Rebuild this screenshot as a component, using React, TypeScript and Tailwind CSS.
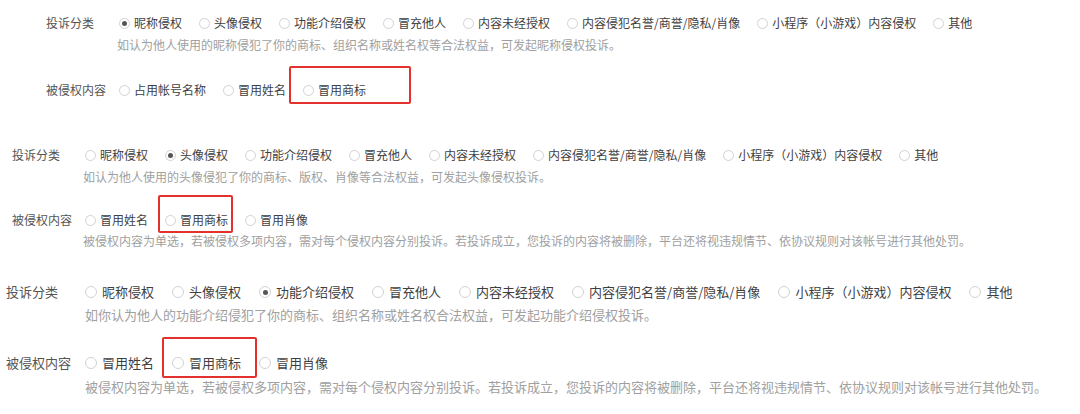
import React from 'react'
import clsx from 'clsx'

const categories = [
  '昵称侵权',
  '头像侵权',
  '功能介绍侵权',
  '冒充他人',
  '内容未经授权',
  '内容侵犯名誉/商誉/隐私/肖像',
  '小程序（小游戏）内容侵权',
  '其他',
]

const penaltyNote =
  '被侵权内容为单选，若被侵权多项内容，需对每个侵权内容分别投诉。若投诉成立，您投诉的内容将被删除，平台还将视违规情节、依协议规则对该帐号进行其他处罚。'

const sizes = {
  sm: {
    text: 'text-[12px]',
    row: 'h-[20px]',
    label: 'w-[73px]',
    desc: 'h-[18px] leading-[18px] pl-[71px]',
    radio: 'size-[11px]',
    opt: 'gap-[4px] mr-[17px]',
  },
  md: {
    text: 'text-[13px]',
    row: 'h-[22px]',
    label: 'w-[79px]',
    desc: 'h-[20px] leading-[20px] pl-[79px]',
    radio: 'size-[12px]',
    opt: 'gap-[5px] mr-[18px]',
  },
}

type Size = keyof typeof sizes

function Radio({ checked, size }: { checked?: boolean; size: Size }) {
  return (
    <span
      className={clsx(
        'flex shrink-0 items-center justify-center rounded-full border border-[#d2d2d2] bg-white',
        sizes[size].radio
      )}
    >
      {checked && <span className="size-[5px] rounded-full bg-[#555]" />}
    </span>
  )
}

function Option({
  text,
  checked,
  size,
  box,
}: {
  text: string
  checked?: boolean
  size: Size
  box?: string
}) {
  return (
    <div className={clsx('relative flex items-center whitespace-nowrap', sizes[size].opt)}>
      <Radio checked={checked} size={size} />
      <span>{text}</span>
      {box && (
        <span className={clsx('pointer-events-none absolute rounded-[2px] border-2 border-[#e3312d]', box)} />
      )}
    </div>
  )
}

function Row({
  label,
  size,
  className,
  children,
}: {
  label: string
  size: Size
  className?: string
  children: React.ReactNode
}) {
  return (
    <div className={clsx('flex items-center', sizes[size].row, className)}>
      <div className={clsx('shrink-0 text-[#555]', sizes[size].label)}>{label}</div>
      <div className="flex items-center">{children}</div>
    </div>
  )
}

function Note({ size, className, children }: { size: Size; className?: string; children: React.ReactNode }) {
  return <div className={clsx('whitespace-nowrap text-[#a0a0a0]', sizes[size].desc, className)}>{children}</div>
}

type Block = {
  size: Size
  wrap: string
  selected: number
  desc: string
  descGap: string
  contentGap: string
  content: string[]
  boxed: number
  box: string
  noteGap?: string
}

const blocks: Block[] = [
  {
    size: 'sm',
    wrap: 'pl-[46px]',
    selected: 0,
    desc: '如认为他人使用的昵称侵犯了你的商标、组织名称或姓名权等合法权益，可发起昵称侵权投诉。',
    descGap: 'mt-[3px]',
    contentGap: 'mt-[26px]',
    content: ['占用帐号名称', '冒用姓名', '冒用商标'],
    boxed: 2,
    box: 'left-[-14px] top-[-15px] h-[38px] w-[122px]',
  },
  {
    size: 'sm',
    wrap: 'mt-[45px] pl-[12px]',
    selected: 1,
    desc: '如认为他人使用的头像侵犯了你的商标、版权、肖像等合法权益，可发起头像侵权投诉。',
    descGap: 'mt-[3px]',
    contentGap: 'mt-[24px]',
    content: ['冒用姓名', '冒用商标', '冒用肖像'],
    boxed: 1,
    box: 'left-[-7px] top-[-16px] h-[38px] w-[75px]',
    noteGap: 'mt-[2px]',
  },
  {
    size: 'md',
    wrap: 'mt-[31px] pl-[6px]',
    selected: 2,
    desc: '如你认为他人的功能介绍侵犯了你的商标、组织名称或姓名权合法权益，可发起功能介绍侵权投诉。',
    descGap: 'mt-[2px]',
    contentGap: 'mt-[27px]',
    content: ['冒用姓名', '冒用商标', '冒用肖像'],
    boxed: 1,
    box: 'left-[-10px] top-[-16px] h-[41px] w-[95px]',
    noteGap: 'mt-[3px]',
  },
]

export default function App() {
  return (
    <div className="h-[414px] w-[1080px] overflow-hidden bg-white pt-[13px] font-['Noto_Sans_CJK_SC',sans-serif] text-[#3f3f3f]">
      {blocks.map((b, i) => (
        <div key={i} className={clsx('flex flex-col', sizes[b.size].text, b.wrap)}>
          <Row label="投诉分类" size={b.size}>
            {categories.map((c, j) => (
              <Option key={c} text={c} size={b.size} checked={j === b.selected} />
            ))}
          </Row>
          <Note size={b.size} className={b.descGap}>
            {b.desc}
          </Note>
          <Row label="被侵权内容" size={b.size} className={b.contentGap}>
            {b.content.map((c, j) => (
              <Option key={c} text={c} size={b.size} box={j === b.boxed ? b.box : undefined} />
            ))}
          </Row>
          {b.noteGap && (
            <Note size={b.size} className={b.noteGap}>
              {penaltyNote}
            </Note>
          )}
        </div>
      ))}
    </div>
  )
}
